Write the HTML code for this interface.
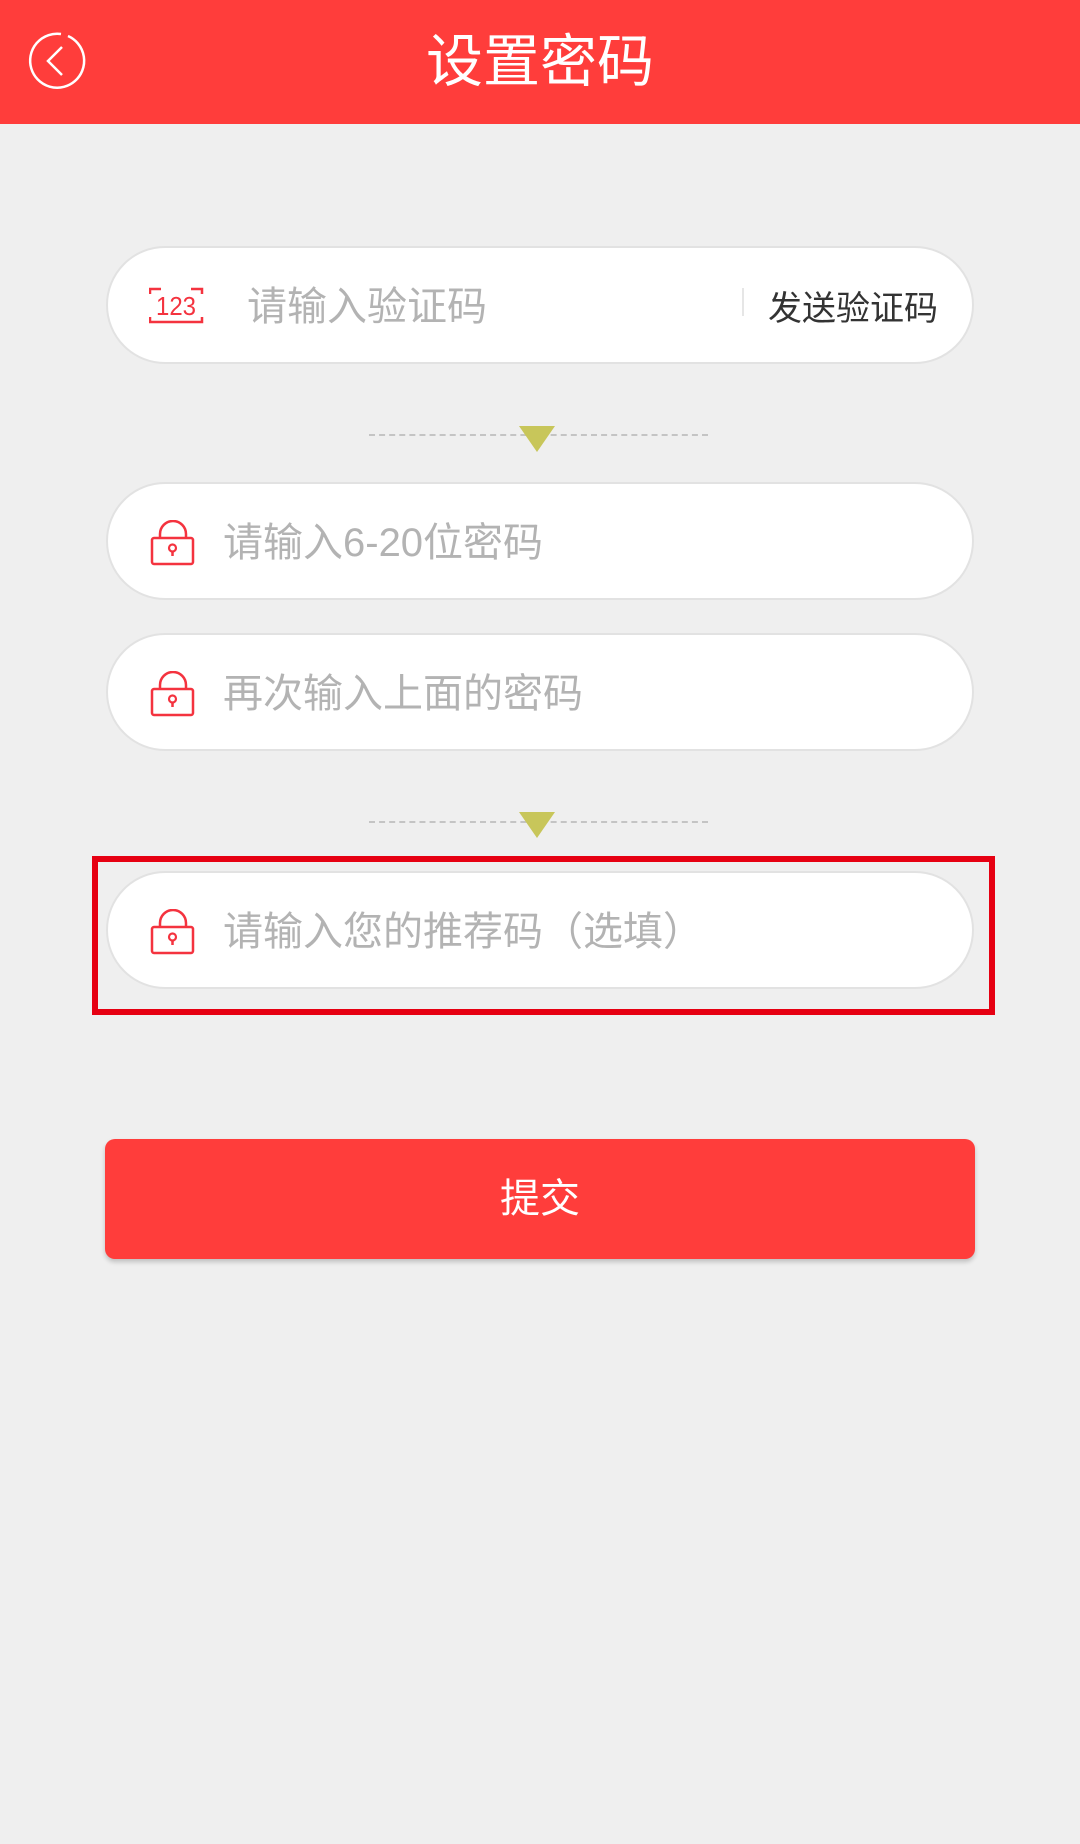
<!DOCTYPE html>
<html><head><meta charset="utf-8"><style>
*{margin:0;padding:0;box-sizing:border-box}
body{width:1080px;height:1844px;background:#efefef;position:relative;overflow:hidden;font-family:"Liberation Sans","Noto Sans CJK SC",sans-serif}
.hdr{position:absolute;left:0;top:0;width:1080px;height:124px;background:#ff3d3b}
.title{position:absolute;left:0;width:1080px;top:0;height:124px;line-height:124px;text-align:center;color:#fff;font-size:57px}
.pill{position:absolute;left:106px;width:868px;height:118px;border-radius:59px;background:#fff;border:2px solid #e2e2e2}
.ph{position:absolute;font-size:40px;color:#b3b3b3;line-height:44px;top:37px;white-space:nowrap}
.lock{position:absolute;left:42px;top:36px}
.dash{position:absolute;left:369px;width:339px;border-top:2px dashed #c4c4c4}
.tri{position:absolute;width:0;height:0;border-left:18px solid transparent;border-right:18px solid transparent;border-top:26px solid #c8c65a}
.box{position:absolute;left:92px;top:856px;width:903px;height:159px;border:6px solid #e60012}
.btn{position:absolute;left:105px;top:1139px;width:870px;height:120px;border-radius:10px;background:#ff3d3b;color:#fff;font-size:40px;text-align:center;line-height:120px;box-shadow:0 3px 5px rgba(0,0,0,.2)}
</style></head><body>
<div class="hdr"></div>
<svg style="position:absolute;left:0;top:0" width="120" height="124"><path d="M61 34 A27 27 0 1 0 68 36" fill="none" stroke="#fff" stroke-width="2.5"/><path d="M62 47 L48 61 L62 75" fill="none" stroke="#fff" stroke-width="2.5"/></svg>
<div class="title">设置密码</div>

<div class="pill" style="top:246px">
<svg style="position:absolute;left:41px;top:39px" width="56" height="40"><path d="M1 7V2H12M42 2H53V7M1 30V35H53V30" fill="none" stroke="#f4333f" stroke-width="2.5"/><text x="27" y="28" text-anchor="middle" font-size="26" fill="#f4333f" font-family="Liberation Sans" textLength="40" lengthAdjust="spacingAndGlyphs">123</text></svg>
<div class="ph" style="left:139px">请输入验证码</div>
<div style="position:absolute;left:634px;top:2px;width:2px;height:28px;margin-top:38px;background:#e6e6e6"></div>
<div class="ph" style="left:660px;color:#333;font-size:34px;top:39px">发送验证码</div>
</div>

<div class="dash" style="top:434px"></div><div class="tri" style="left:519px;top:426px"></div>

<div class="pill" style="top:482px">
<svg class="lock" width="46" height="46"><path d="M10 18V14A13 13 0 0 1 36 14V18" fill="none" stroke="#f4333f" stroke-width="2.5"/><rect x="2" y="18" width="41" height="26" rx="2" fill="none" stroke="#f4333f" stroke-width="2.5"/><circle cx="22.5" cy="28" r="3.5" fill="none" stroke="#f4333f" stroke-width="2.2"/><path d="M22.5 31V36" stroke="#f4333f" stroke-width="2.5"/></svg>
<div class="ph" style="left:115px">请输入6-20位密码</div>
</div>
<div class="pill" style="top:633px">
<svg class="lock" width="46" height="46"><path d="M10 18V14A13 13 0 0 1 36 14V18" fill="none" stroke="#f4333f" stroke-width="2.5"/><rect x="2" y="18" width="41" height="26" rx="2" fill="none" stroke="#f4333f" stroke-width="2.5"/><circle cx="22.5" cy="28" r="3.5" fill="none" stroke="#f4333f" stroke-width="2.2"/><path d="M22.5 31V36" stroke="#f4333f" stroke-width="2.5"/></svg>
<div class="ph" style="left:115px">再次输入上面的密码</div>
</div>

<div class="dash" style="top:821px"></div><div class="tri" style="left:519px;top:812px"></div>

<div class="box"></div>
<div class="pill" style="top:871px">
<svg class="lock" width="46" height="46"><path d="M10 18V14A13 13 0 0 1 36 14V18" fill="none" stroke="#f4333f" stroke-width="2.5"/><rect x="2" y="18" width="41" height="26" rx="2" fill="none" stroke="#f4333f" stroke-width="2.5"/><circle cx="22.5" cy="28" r="3.5" fill="none" stroke="#f4333f" stroke-width="2.2"/><path d="M22.5 31V36" stroke="#f4333f" stroke-width="2.5"/></svg>
<div class="ph" style="left:115px">请输入您的推荐码（选填）</div>
</div>

<div class="btn">提交</div>
</body></html>
